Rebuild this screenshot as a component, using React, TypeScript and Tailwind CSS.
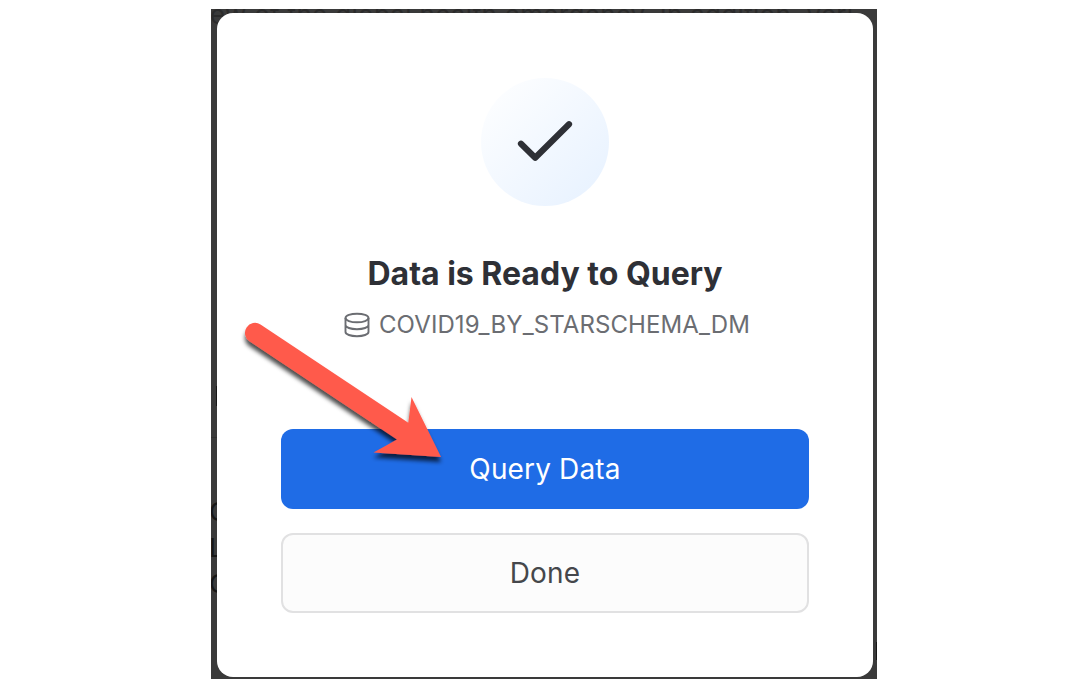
export default function App() {
  return (
    <div className="flex h-[691px] w-full justify-center overflow-hidden bg-white pr-[2px] pt-[9px] font-[Inter,sans-serif]">
      <div className="relative h-[670px] w-[666px] overflow-hidden bg-[#3a3a3a] pl-[6px] pr-[4px] pt-[4px] text-[#161616]">
        <div className="absolute left-[-1px] top-[-10px] whitespace-nowrap text-[26px] leading-8 tracking-[0.3px] text-[#2b2b2b]">
          ew of the global health emergency. In addition, veri
        </div>
        <div className="absolute left-[5px] top-[377px] h-[20px] w-px bg-[#161616]" />
        <div className="absolute left-0 top-[428px] h-px w-[6px] bg-[#303030]" />
        <div className="absolute left-[-2px] top-[485px] text-[26px] leading-[36px]">
          <div>C</div>
          <div>L</div>
          <div>C</div>
        </div>
        <div className="absolute right-0 top-[633px] h-[18px] w-px bg-[#161616]" />
        <main className="relative flex h-[664px] w-[656px] flex-col items-center rounded-[16px] bg-white px-16 pt-[65px]">
          <div className="flex size-32 shrink-0 items-center justify-center rounded-full bg-linear-to-br from-white to-[#e6f1ff]">
            <svg width="128" height="128" viewBox="0 0 128 128" fill="none">
              <path d="M40 65.7 54.2 79.7 88 46.2" stroke="#2e3036" strokeWidth="6.2" strokeLinecap="round" strokeLinejoin="round" />
            </svg>
          </div>
          <h1 className="mt-12 whitespace-nowrap text-[32px] font-bold leading-10 text-[#2e3036]">Data is Ready to Query</h1>
          <div className="ml-[4px] mt-[15px] flex h-8 items-center gap-[9px] text-[#6b6d72]">
            <svg width="26" height="26" viewBox="0 0 26 26" fill="none" stroke="currentColor" strokeWidth="1.9">
              <ellipse cx="13" cy="6" rx="11.5" ry="4.3" />
              <path d="M1.5 6v14c0 2.4 5.1 4.2 11.5 4.2s11.5-1.8 11.5-4.2V6M1.5 13c0 2.4 5.1 4.2 11.5 4.2s11.5-1.8 11.5-4.2" />
            </svg>
            <span className="whitespace-nowrap text-[24px] leading-8 tracking-[0.1px]">COVID19_BY_STARSCHEMA_DM</span>
          </div>
          <button className="mt-[88px] h-20 w-full shrink-0 rounded-xl bg-[#1f6ce6] text-[28px] tracking-[0.15px] text-white">Query Data</button>
          <button className="mt-6 h-20 w-full shrink-0 rounded-xl border-2 border-[#e1e1e2] bg-[#fcfcfc] text-[28px] tracking-[0.15px] text-[#45474b]">Done</button>
        </main>
        <svg className="absolute left-0 top-0" width="300" height="500" viewBox="211 9 300 500">
          <defs>
            <filter id="shadow" x="-10%" y="-10%" width="120%" height="130%">
              <feDropShadow dx="0" dy="5" stdDeviation="2" floodColor="#000" floodOpacity="0.7" />
            </filter>
          </defs>
          <path filter="url(#shadow)" fill="#ff5a4c" d="M260.5 324.5 408.3 422.8 411.5 397 441 457 373.5 452.5 397 439.5 249.5 341.3A10 10 0 0 1 260.5 324.5Z" />
        </svg>
      </div>
    </div>
  );
}
